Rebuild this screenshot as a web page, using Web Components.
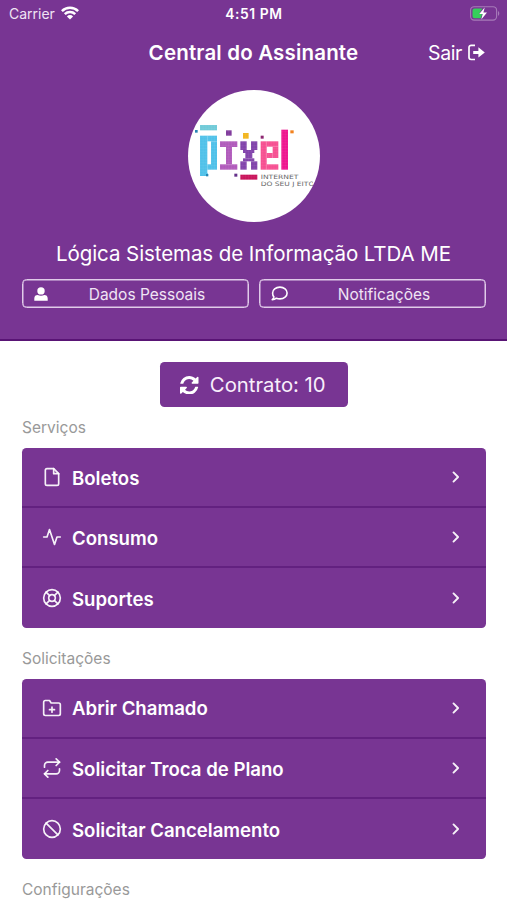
<!DOCTYPE html>
<html lang="pt-BR">
<head>
<meta charset="utf-8">
<title>Central do Assinante</title>
<style>
html,body{margin:0;height:900px;overflow:hidden;background:#fff}
body{font-family:Inter,"Liberation Sans",sans-serif;--p:#783593;--line:#591475}
</style>
</head>
<body>
<subscriber-app></subscriber-app>
<script>
const feather = {
  file:'<path d="M14 2H6a2 2 0 0 0-2 2v16a2 2 0 0 0 2 2h12a2 2 0 0 0 2-2V8z"/><path d="M14 2v6h6"/>',
  activity:'<path d="M22 12h-4l-3 9L9 3l-3 9H2"/>',
  buoy:'<circle cx="12" cy="12" r="10"/><circle cx="12" cy="12" r="4"/><path d="M4.93 4.93l4.24 4.24M14.83 14.83l4.24 4.24M14.83 9.17l4.24-4.24M4.93 19.07l4.24-4.24"/>',
  folder:'<path d="M22 19a2 2 0 0 1-2 2H4a2 2 0 0 1-2-2V5a2 2 0 0 1 2-2h5l2 3h9a2 2 0 0 1 2 2z"/><path d="M12 11v6M9 14h6"/>',
  repeat:'<path d="M17 1l4 4-4 4"/><path d="M3 11V9a4 4 0 0 1 4-4h14"/><path d="M7 23l-4-4 4-4"/><path d="M21 13v2a4 4 0 0 1-4 4H3"/>',
  slash:'<circle cx="12" cy="12" r="10"/><path d="M4.93 4.93l14.14 14.14"/>',
  chevron:'<path d="M9 17.5l5.5-5.5L9 6.5"/>'
};
const wrap = (vb, w, h, body) => `<svg viewBox="${vb}" width="${w}" height="${h}" aria-hidden="true">${body}</svg>`;
const solid = {
  wifi: wrap('0 0 18 14',18,14,'<g fill="none" stroke="#fff" stroke-width="2.5"><path d="M.9 5.1a11.5 11.5 0 0 1 16.2 0"/><path d="M3.8 8.2a7.4 7.4 0 0 1 10.4 0"/></g><path fill="#fff" d="M9 13.6L5.9 10.4a4.4 4.4 0 0 1 6.2 0z"/>'),
  battery: wrap('0 0 30 15',30,15,'<rect x=".6" y=".7" width="26" height="13.4" rx="3.6" fill="none" stroke="#a77bb9" stroke-width="1.1"/><path d="M28 5v4.8c1.7-.7 1.7-4 0-4.8z" fill="#a77bb9"/><path d="M4.5 2.6h7.8L9 8h3l-1 4.2H4.5a2 2 0 0 1-2-2V4.6a2 2 0 0 1 2-2z" fill="#35cf5b"/><path d="M14.7 1.6L9.2 8h3.5l-1.4 5.4L17 6.6h-3.6z" fill="#fff"/>'),
  exit: wrap('0 0 17 17',17,17,'<path d="M7 1.3H3.2A2.2 2.2 0 0 0 1 3.5v9.8a2.2 2.2 0 0 0 2.2 2.2H7" fill="none" stroke="#fff" stroke-width="1.7"/><path d="M5.2 6.9h5.2V3.3l6.4 5.1-6.4 5.1V9.9H5.2z" fill="#fff"/>'),
  user: wrap('0 0 14 14',14,14,'<circle cx="7" cy="3.9" r="3.7" fill="#fff"/><path d="M.3 13.7v-2.1c0-2.5 1.4-3.6 3.4-3.6 2 1 4.6 1 6.6 0 2 0 3.4 1.1 3.4 3.6v2.1z" fill="#fff"/>'),
  comment: wrap('0 0 17 15',17,15,'<path d="M8.9 1.1c4.2 0 7.2 2.6 7.2 5.9s-3 5.9-7.2 5.9c-1.3 0-2.5-.2-3.5-.7-1.1.9-2.5 1.5-4.2 1.6.9-.9 1.5-1.9 1.7-3-1-.9-1.3-2.3-1.3-3.8 0-3.3 3.1-5.9 7.3-5.9z" fill="none" stroke="#fff" stroke-width="1.6" stroke-linejoin="round"/>'),
  refresh: wrap('0 0 1536 1536',18.5,18.5,'<path fill="#fff" d="M1511 928q0 5-1 7-64 268-268 434.500T764 1536q-146 0-282.500-55T238 1324l-129 129q-19 19-45 19t-45-19-19-45V960q0-26 19-45t45-19h448q26 0 45 19t19 45-19 45l-137 137q71 66 161 102t187 36q134 0 250-65t186-179q11-17 53-117 8-23 30-23h192q13 0 22.500 9.500t9.500 22.500zm25-800v448q0 26-19 45t-45 19h-448q-26 0-45-19t-19-45 19-45l138-138Q969 256 768 256q-134 0-250 65T332 500q-11 17-53 117-8 23-30 23H50q-13 0-22.500-9.500T18 608v-7q65-268 270-434.500T768 0q146 0 284 55.500T1297 212l130-129q19-19 45-19t45 19 19 45z"/>')
};
class Base extends HTMLElement {
  connectedCallback(){ this.attachShadow({mode:'open'}).innerHTML = `<style>*{box-sizing:border-box}${this.css()}</style>${this.html()}`; }
}
customElements.define('ui-icon', class extends Base {
  css(){return ':host{display:inline-flex;flex:none}svg{display:block}'}
  html(){
    const n=this.getAttribute('name'), s=this.getAttribute('size')||20;
    return solid[n] || wrap('0 0 24 24',s,s,`<g fill="none" stroke="#fff" stroke-opacity=".93" stroke-width="${n==='chevron'?2.3:2}" stroke-linecap="round" stroke-linejoin="round">${feather[n]}</g>`);
  }
});
customElements.define('status-bar', class extends Base {
  css(){return ':host{display:grid;grid-template-columns:1fr auto 1fr;align-items:center;height:27px;padding:0 7px 0 9px;font-size:13.5px;color:#fff}.l{display:flex;align-items:center;gap:6px;color:#f0e4f4;font-size:14px}.t{font-weight:600;font-size:13.8px;letter-spacing:.6px;margin-right:1px}ui-icon{margin-top:-1px}.r{justify-self:end}'}
  html(){return '<div class="l"><span>Carrier</span><ui-icon name="wifi"></ui-icon></div><div class="t">4:51 PM</div><ui-icon class="r" name="battery"></ui-icon>'}
});
customElements.define('nav-bar', class extends Base {
  css(){return ':host{display:grid;grid-template-columns:1fr auto 1fr;align-items:center;height:50px;padding:0 22px;color:#fff}h1{grid-column:2;margin:0;font-size:20.5px;font-weight:600;letter-spacing:.17px}.x{justify-self:end;display:flex;align-items:center;gap:6px;font-size:19.5px;letter-spacing:-.4px}.x span{padding-top:1px}'}
  html(){return '<h1><slot></slot></h1><div class="x"><span>Sair</span><ui-icon name="exit"></ui-icon></div>'}
});
customElements.define('brand-avatar', class extends Base {
  css(){return ':host{display:block;width:132px;height:132px;border-radius:50%;background:#fff;overflow:hidden}svg{display:block}'}
  html(){
    const r=(c,...a)=>a.map(([x,y,X,Y])=>`<rect x="${x}" y="${y}" width="${X-x}" height="${Y-y}" fill="${c}"/>`).join('');
    return wrap('24 13 396 396',132,132,
    '<defs><pattern id="g" width="8.5" height="8.5" patternUnits="userSpaceOnUse"><path d="M0 0H8.5M0 0V8.5" stroke="#fff" stroke-opacity=".2" stroke-width="1.2"/></pattern><clipPath id="c"><rect x="230" y="255" width="169" height="60"/></clipPath></defs>'+
    r('#70cad8',[60,118,111,134])+
    r('#4fc1e9',[60,150,82,271],[82,150,111,167],[93,167,111,252],[82,236,93,252],[76,262,83,271])+
    r('#803a9c',[138,134,155,150])+
    r('#b05abb',[120,167,172,184],[138,184,156,236],[120,236,172,252])+
    r('#8143ab',[181,167,200,193],[213,167,232,193],[189,193,223,202],[196,202,217,218],[189,218,223,227],[181,227,200,252],[213,227,232,252])+
    r('#f2b51e',[189,142,206,159])+
    r('#f64f91',[242,167,260,252],[260,167,295,183],[278,183,295,217],[260,202,278,217],[260,236,295,252])+
    r('#ee168f',[304,132,324,252])+r('#c9145b',[181,267,232,282])+
    '<rect x="55" y="114" width="272" height="172" fill="url(#g)"/>'+
    r('#2785b5',[45,133,53,141],[78,265,85,272])+r('#8d2671',[242,150,251,159])+r('#f2821f',[331,134,341,143])+r('#64308a',[163,264,172,273])+
    '<g clip-path="url(#c)" fill="#666" font-family="DejaVu Sans,sans-serif" font-size="18"><text x="242" y="279.5" textLength="113" lengthAdjust="spacingAndGlyphs">INTERNET</text><text x="242" y="301.5" textLength="161" lengthAdjust="spacingAndGlyphs">DO SEU J EITO</text></g>');
  }
});
customElements.define('outline-button', class extends Base {
  css(){return ':host{display:flex;align-items:center;height:29px;border:1.5px solid #e0cbe9;box-shadow:inset 0 0 0 .5px #e0cbe9;border-radius:4.5px;padding:0 11px;color:#f0e4f4;font-size:15.5px}ui-icon{width:17px;padding-top:1px}span{flex:1;text-align:center;padding:2px 0 0 7px}'}
  html(){return `<ui-icon name="${this.getAttribute('icon')}"></ui-icon><span><slot></slot></span>`}
});
customElements.define('profile-header', class extends Base {
  css(){return ':host{display:block;height:341px;background:var(--p);border-bottom:2px solid var(--line);box-sizing:border-box}brand-avatar{margin:12.5px auto 0}h2{margin:18px 0 0;height:26px;line-height:27px;text-align:center;color:#fff;font-size:20.5px;font-weight:400;letter-spacing:-.08px;white-space:nowrap}.b{display:grid;grid-template-columns:1fr 1fr;gap:10px;padding:0 21.5px;margin-top:13.4px}'}
  html(){return '<status-bar></status-bar><nav-bar>Central do Assinante</nav-bar><brand-avatar></brand-avatar><h2>Lógica Sistemas de Informação LTDA ME</h2><div class="b"><outline-button icon="user">Dados Pessoais</outline-button><outline-button icon="comment">Notificações</outline-button></div>'}
});
customElements.define('contract-button', class extends Base {
  css(){return ':host{display:flex;align-items:center;justify-content:center;gap:11px;width:188px;height:45px;margin:21.4px auto 0;padding-right:1px;box-sizing:border-box;background:var(--p);border-radius:4.5px;color:#f8effb;font-size:20.3px}'}
  html(){return '<ui-icon name="refresh"></ui-icon><span><slot></slot></span>'}
});
customElements.define('menu-row', class extends Base {
  css(){return ':host{display:flex;align-items:center;height:60.2px;padding:0 20px 0 20.5px;color:#fff;font-size:18.6px;font-weight:600;border-bottom:2px solid #632180;box-sizing:border-box}:host(:last-child){border-bottom:0;height:59.6px}span{flex:1;padding-left:10px;padding-top:1px}'}
  html(){return `<ui-icon name="${this.getAttribute('icon')}"></ui-icon><span><slot></slot></span><ui-icon name="chevron"></ui-icon>`}
});
customElements.define('menu-section', class extends Base {
  css(){return ':host{display:block;padding:0 21.5px}h3{margin:0;height:40.6px;line-height:41px;padding-left:.5px;font-size:15.5px;font-weight:400;color:#999}.c{background:var(--p);border-radius:4.5px;overflow:hidden}'}
  html(){return `<h3>${this.getAttribute('label')}</h3><div class="c"><slot></slot></div>`}
});
customElements.define('subscriber-app', class extends Base {
  css(){return ':host{display:block;height:900px;overflow:hidden}.m{display:grid;gap:10.3px}'}
  html(){return `<profile-header></profile-header><contract-button>Contrato: 10</contract-button><div class="m">
<menu-section label="Serviços"><menu-row icon="file">Boletos</menu-row><menu-row icon="activity">Consumo</menu-row><menu-row icon="buoy">Suportes</menu-row></menu-section>
<menu-section label="Solicitações"><menu-row icon="folder">Abrir Chamado</menu-row><menu-row icon="repeat">Solicitar Troca de Plano</menu-row><menu-row icon="slash">Solicitar Cancelamento</menu-row></menu-section>
<menu-section label="Configurações"></menu-section></div>`}
});
</script>
</body>
</html>
